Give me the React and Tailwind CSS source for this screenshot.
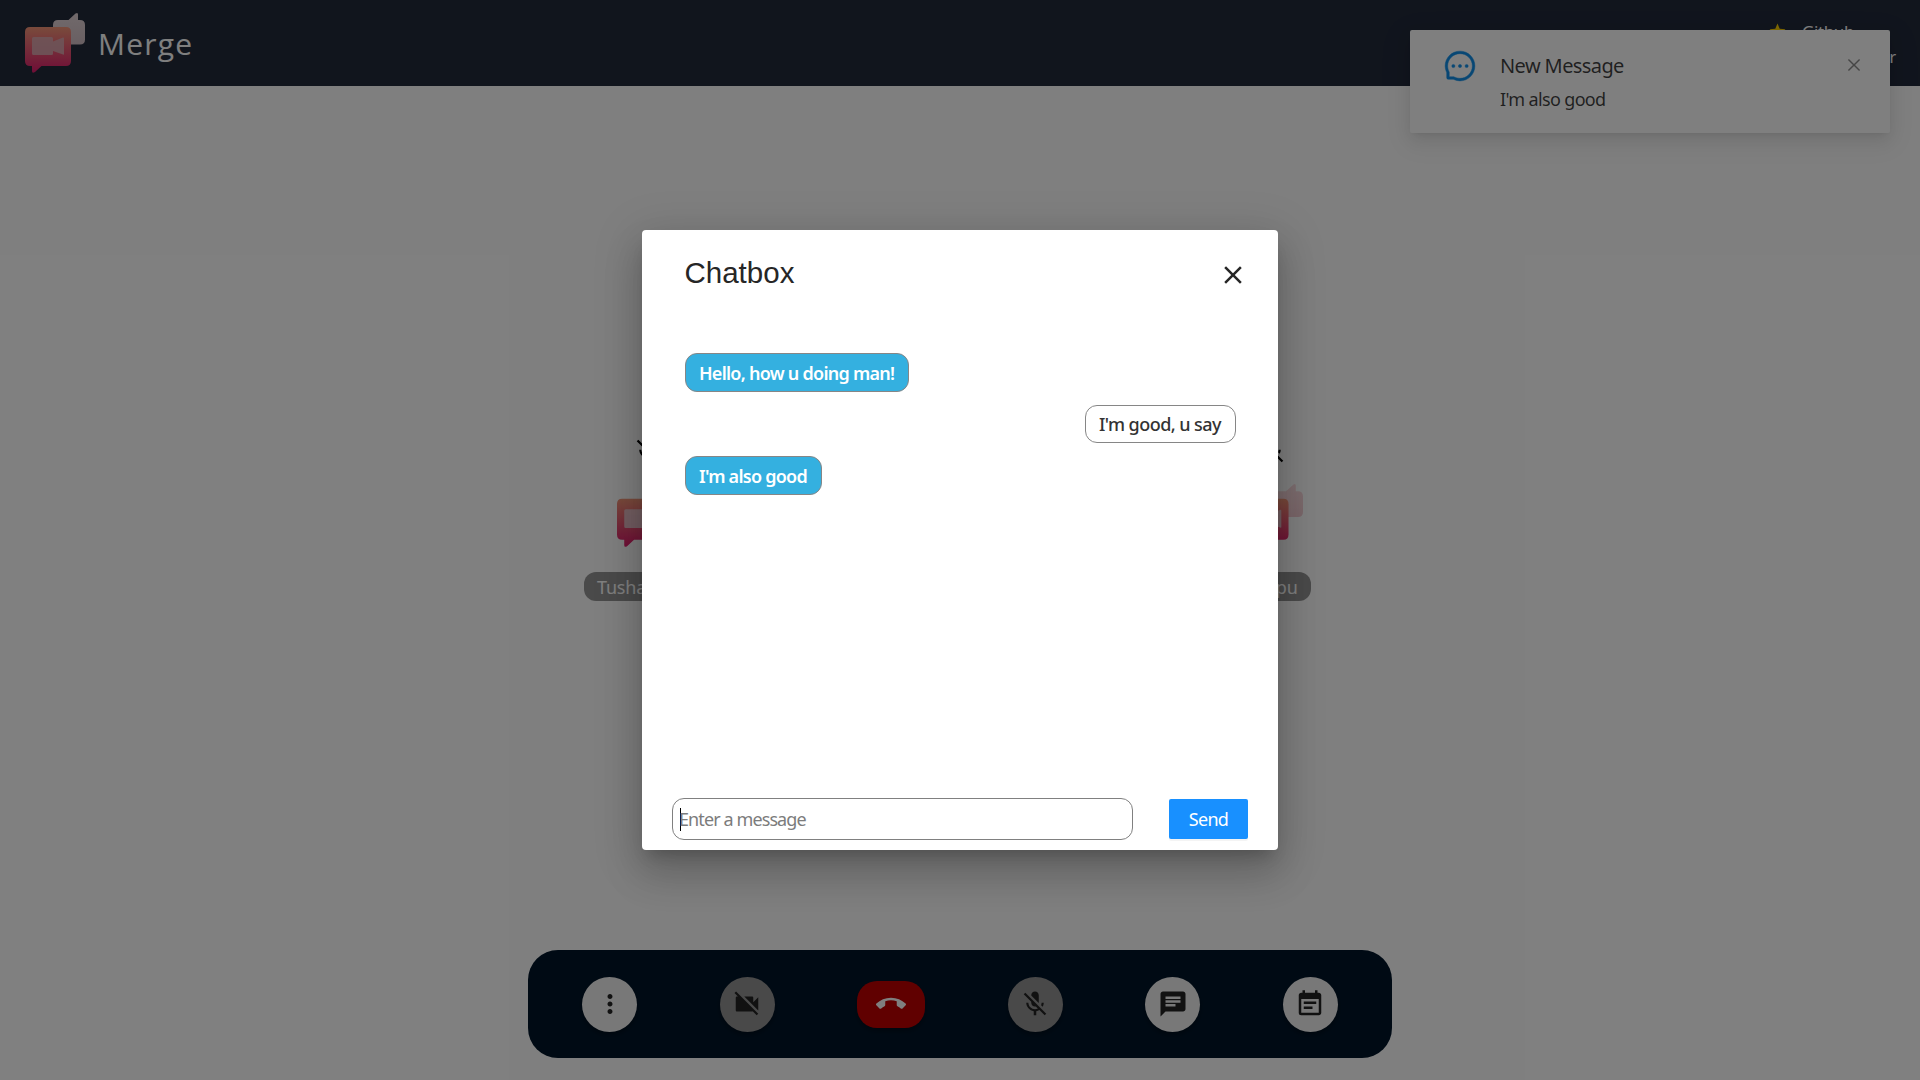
import React from "react";
import { AiOutlineMessage, AiOutlineClose } from "react-icons/ai";
import {
  MdCallEnd,
  MdChat,
  MdClose,
  MdEventNote,
  MdMicOff,
  MdMoreVert,
  MdStar,
  MdVideocamOff,
} from "react-icons/md";

function Logo({ className, id, pale }) {
  return (
    <svg viewBox="0 0 60 60" preserveAspectRatio="none" className={className} fill="none">
      <defs>
        <linearGradient id={id + "a"} x1="0" y1="14" x2="0" y2="58" gradientUnits="userSpaceOnUse">
          <stop stopColor="#f39678" />
          <stop offset="1" stopColor="#e0206e" />
        </linearGradient>
        <linearGradient id={id + "b"} x1="0" y1="0" x2="0" y2="31" gradientUnits="userSpaceOnUse">
          <stop stopColor={pale ? "#fadcdf" : "#e2d4d7"} />
          <stop offset="1" stopColor={pale ? "#f4cbd2" : "#d3bfc5"} />
        </linearGradient>
      </defs>
      <path
        d="M33 7H43.5L50.5 .6Q53 -1 53 1.500V7H55Q60 7 60 12V26.500Q60 31.500 55 31.500H33Q28 31.500 28 26.500V12Q28 7 33 7Z"
        fill={`url(#${id}b)`}
      />
      <path
        d="M5 14H41Q46 14 46 19V48Q46 53 41 53H16.500L10 59Q7 61 7 58V53H5Q0 53 0 48V19Q0 14 5 14Z"
        fill={`url(#${id}a)`}
      />
      <path
        d="M8.500 24H26.500Q28 24 28 25.500V28.500L38 24.500Q39 24.300 39 25.500V41Q39 42 38 41.500L28 38V40.500Q28 42 26.500 42H8.500Q7 42 7 40.500V25.500Q7 24 8.500 24Z"
        fill={pale ? "#e4c4cc" : "#dba9b0"}
        fillOpacity=".9"
      />
    </svg>
  );
}

function Participant({ name, id, width }) {
  return (
    <div className="flex flex-col items-center">
      <MdMicOff className="size-[30px] text-black" />
      <Logo id={id} pale className="mt-[18px] h-[63px] w-[62px] overflow-visible" />
      <div
        className={`mt-[25px] flex h-[29px] items-center rounded-xl bg-[#959595] pt-px text-[18px] tracking-[-0.2px] whitespace-nowrap text-white ${width}`}
      >
        {name}
      </div>
    </div>
  );
}

function RoundButton({ icon: Icon, muted }) {
  return (
    <button
      className={`flex size-[55px] items-center justify-center rounded-full text-[#222] shadow-[0_3px_5px_rgba(0,0,0,0.3)] ${
        muted ? "bg-[#929292]" : "bg-[#f0f0f0]"
      }`}
    >
      <Icon className="size-[30px]" />
    </button>
  );
}

function Toast() {
  return (
    <div className="absolute top-[30px] right-[30px] flex h-[103px] w-[480px] rounded-[2px] bg-white pl-[33px] shadow-[0_3px_6px_-4px_rgba(0,0,0,0.12),0_6px_16px_0_rgba(0,0,0,0.08),0_9px_28px_8px_rgba(0,0,0,0.05)]">
      <AiOutlineMessage className="mt-[19px] size-[34px] shrink-0 stroke-[14] text-[#108ee9]" />
      <div className="ml-[23px] flex-1 pt-[20px] text-black/75">
        <div className="text-[20px] leading-[32px] tracking-[-0.6px]">New Message</div>
        <div className="mt-[3px] text-[18px] leading-[28px] tracking-[-0.65px]">I'm also good</div>
      </div>
      <AiOutlineClose className="mt-[26px] mr-[27px] size-[18px] text-black/45" />
    </div>
  );
}

function Message({ text, mine, width }) {
  return (
    <div
      className={`flex items-center rounded-xl border border-[#868686] pt-px pl-[13px] text-[18px] whitespace-nowrap ${width} ${
        mine
          ? "h-[38px] self-end bg-white font-medium tracking-[-0.55px] text-[#333]"
          : "h-[39px] self-start bg-[#34b0e0] font-semibold tracking-[-0.74px] text-white"
      }`}
    >
      {text}
    </div>
  );
}

function ChatDialog() {
  return (
    <div className="flex h-[620px] w-[636px] flex-col rounded bg-white shadow-[0_11px_15px_-7px_rgba(0,0,0,0.2),0_24px_38px_3px_rgba(0,0,0,0.14),0_9px_46px_8px_rgba(0,0,0,0.12)]">
      <div className="flex h-[88px] items-center justify-between pr-[30px] pl-[42.500px] text-[#262626]">
        <h2 className="pb-[2px] font-['Liberation_Sans',sans-serif] text-[29.500px] leading-10">Chatbox</h2>
        <MdClose className="mt-[2px] size-[30px]" />
      </div>
      <div className="flex flex-1 flex-col gap-[13px] pt-[35px] pr-[42px] pl-[43px]">
        <Message text="Hello, how u doing man!" width="w-[224px]" />
        <Message text="I'm good, u say" mine width="w-[151px]" />
        <Message text="I'm also good" width="w-[137px]" />
      </div>
      <div className="flex items-center justify-between pr-[30px] pb-[10px] pl-[30px]">
        <div className="flex h-[42px] w-[461px] items-center rounded-xl border border-[#808080] pl-[7px]">
          <span className="h-[23px] w-px bg-black" />
          <span className="-ml-[2px] pt-px text-[18px] tracking-[-0.9px] text-[#7c7c7c]">Enter a message</span>
        </div>
        <button className="h-10 w-[79px] rounded-[2px] bg-[#1890ff] pt-px text-[18px] tracking-[-0.7px] text-white shadow-[0_2px_0_rgba(0,0,0,0.045)]">
          Send
        </button>
      </div>
    </div>
  );
}

export default function App() {
  return (
    <div className="relative flex h-[1080px] w-[1920px] flex-col overflow-hidden bg-white font-['Noto_Sans','Open_Sans',sans-serif]">
      <header className="flex h-[86px] shrink-0 items-center justify-between bg-[#222a3b] pr-[24px] pl-[25px]">
        <div className="flex items-center">
          <Logo id="brand" className="size-[60px] overflow-visible" />
          <span className="ml-[13px] pt-px font-['Open_Sans',sans-serif] text-[30px] leading-[40px] tracking-[1.2px] text-white">
            Merge
          </span>
        </div>
        <div className="flex flex-col items-end text-white">
          <div className="mr-[42px] flex h-6 items-center pt-[5px] text-[17px] tracking-[-0.4px]">
            <MdStar className="mr-[15px] size-[19px] text-[#ffd200]" />
            Github
          </div>
          <div className="pt-[4px] text-[16px] leading-6">Developer</div>
        </div>
      </header>

      <main className="mx-auto grid w-[1248px] flex-1 grid-cols-2 pt-[350px]">
        <Participant name="Tushar Nagar" id="left" width="w-[128px] pl-[13px]" />
        <Participant name="Deepu" id="right" width="w-[78px] pl-[10px]" />
      </main>

      <footer className="mx-auto mb-[22px] flex h-[108px] w-[864px] shrink-0 items-center justify-between rounded-[30px] bg-[#001529] px-[54px]">
        <RoundButton icon={MdMoreVert} />
        <RoundButton icon={MdVideocamOff} muted />
        <button className="flex h-[47px] w-[68px] items-center justify-center rounded-[20px] bg-[#c00000] text-white shadow-[0_3px_5px_rgba(0,0,0,0.3)]">
          <MdCallEnd className="size-[30px]" />
        </button>
        <RoundButton icon={MdMicOff} muted />
        <RoundButton icon={MdChat} />
        <RoundButton icon={MdEventNote} />
      </footer>

      <Toast />
      <div className="absolute inset-0 flex items-center justify-center bg-black/50">
        <ChatDialog />
      </div>
    </div>
  );
}
